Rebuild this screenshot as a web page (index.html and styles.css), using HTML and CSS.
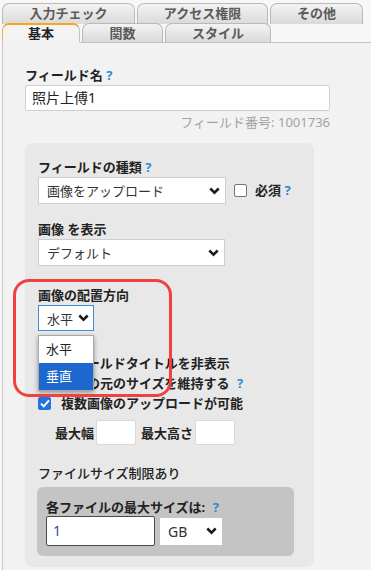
FILE: index.html
```html
<!DOCTYPE html>
<html lang="ja">
  <head>
    <meta charset="UTF-8" />
    <meta name="viewport" content="width=device-width, initial-scale=1.0" />
    <title>フィールド設定</title>
    <link rel="stylesheet" href="styles.css">
  </head>
  <body>
    <div class="page">
      <div class="tabbar">
        <div class="tab-row back">
          <div class="tab t-check">入力チェック</div>
          <div class="tab t-access">アクセス権限</div>
          <div class="tab t-other">その他</div>
        </div>
        <div class="tab-row front">
          <div class="tab active t-basic">基本</div>
          <div class="tab t-func">関数</div>
          <div class="tab t-style">スタイル</div>
        </div>
      </div>

      <div class="content">
        <div class="field">
          <div class="label">フィールド名 <span class="help">?</span></div>
          <div class="text-input name-input">照片上傅1</div>
          <div class="field-id">フィールド番号: 1001736</div>
        </div>

        <div class="panel">
          <div class="group g-type">
            <div class="label">フィールドの種類 <span class="help">?</span></div>
            <div class="row">
              <div class="select type-select">
                <span>画像をアップロード</span>
                <svg class="chev" width="11" height="8" viewBox="0 0 11 8"><path d="M1.3 1.5l4.2 4.2 4.2-4.2" fill="none" stroke="#1a1a1a" stroke-width="2.5"/></svg>
              </div>
              <span class="checkbox"></span>
              <span class="label inline">必須 <span class="help">?</span></span>
            </div>
          </div>

          <div class="group g-display">
            <div class="label">画像 を表示</div>
            <div class="select display-select">
              <span>デフォルト</span>
              <svg class="chev" width="11" height="8" viewBox="0 0 11 8"><path d="M1.3 1.5l4.2 4.2 4.2-4.2" fill="none" stroke="#1a1a1a" stroke-width="2.5"/></svg>
            </div>
          </div>

          <div class="group g-dir">
            <div class="label">画像の配置方向</div>
            <div class="select dir-select">
              <span>水平</span>
              <svg class="chev" width="11" height="8" viewBox="0 0 11 8"><path d="M1.3 1.5l4.2 4.2 4.2-4.2" fill="none" stroke="#1a1a1a" stroke-width="2.5"/></svg>
            </div>
          </div>

          <div class="checks">
            <div class="check-row"><span class="checkbox"></span><span class="label inline">フィールドタイトルを非表示</span></div>
            <div class="check-row"><span class="checkbox"></span><span class="label inline">画像の元のサイズを維持する <span class="help gap">?</span></span></div>
            <div class="check-row">
              <span class="checkbox checked">
                <svg width="10" height="9" viewBox="0 0 10 9"><path d="M1 4.6l2.8 2.8L9 1.4" fill="none" stroke="#fff" stroke-width="2"/></svg>
              </span>
              <span class="label inline">複数画像のアップロードが可能</span>
            </div>
          </div>

          <div class="size-row">
            <span class="label inline">最大幅</span>
            <span class="small-input"></span>
            <span class="label inline max-h">最大高さ</span>
            <span class="small-input"></span>
          </div>

          <div class="limit-title">ファイルサイズ制限あり</div>

          <div class="inner-panel">
            <div class="label">各ファイルの最大サイズは: <span class="help gap">?</span></div>
            <div class="row">
              <div class="text-input size-input">1</div>
              <div class="select unit-select">
                <span>GB</span>
                <svg class="chev" width="11" height="8" viewBox="0 0 11 8"><path d="M1.3 1.5l4.2 4.2 4.2-4.2" fill="none" stroke="#1a1a1a" stroke-width="2.5"/></svg>
              </div>
            </div>
          </div>
        </div>
      </div>

      <!-- open dropdown of 画像の配置方向 -->
      <div class="dropdown">
        <div class="option">水平</div>
        <div class="option selected">垂直</div>
      </div>

      <!-- red annotation frame -->
      <div class="callout"></div>
    </div>
  </body>
</html>
```

FILE: styles.css
```css
* {
  box-sizing: border-box;
  margin: 0;
  padding: 0;
  font-family: "Noto Sans", "Noto Sans CJK JP", sans-serif;
}

body {
  background: #f7f7f7;
  width: 371px;
  height: 570px;
  overflow: hidden;
}

.page {
  position: relative;
  width: 371px;
  height: 570px;
}

/* tabs */
.tabbar {
  padding: 3px 0 0 2px;
}

.tab-row {
  display: flex;
  gap: 2px;
}

.tab {
  height: 21px;
  border: 1px solid #b9b9b9;
  border-bottom: none;
  border-radius: 7px 7px 0 0;
  background: linear-gradient(#f3f3f3, #dadada);
  color: #5a5a5a;
  font-size: 13px;
  font-weight: 700;
  line-height: 19px;
  text-align: center;
}

.tab-row.front {
  margin-top: -1px;
  position: relative;
  z-index: 1;
}

.tab-row.front .tab {
  height: 20px;
  border-bottom: 1px solid #c4c4c4;
}

.t-check { width: 133px; }
.t-access { width: 131px; }
.t-other { width: 93px; }
.t-basic { width: 78px; }
.t-func { width: 81px; }
.t-style { width: 106px; }

.tab-row.front .tab.active {
  background: #f3f3f3;
  border-color: #f5a623 #c4c4c4 #f3f3f3 #e8b45a;
  border-top-width: 2px;
  color: #222;
  line-height: 17px;
}

/* content */
.content {
  margin-top: -1px;
  border-top: 1px solid #c4c4c4;
  border-left: 1px solid #c8c8c8;
  margin-left: 2px;
  background: #f2f2f2;
  height: 528px;
  padding: 24px 0 0 22px;
}

.label {
  font-size: 13px;
  font-weight: 700;
  color: #222;
  line-height: 16px;
}

.label.inline {
  display: inline-block;
}

.help {
  color: #2b8bd3;
  font-weight: 700;
}

.help.gap {
  margin-left: 4px;
}

.field {
  width: 305px;
}

.text-input {
  background: #fff;
  border: 1px solid #cfcfcf;
  border-radius: 2px;
  color: #222;
  font-size: 14px;
}

.name-input {
  margin-top: 2px;
  height: 26px;
  line-height: 24px;
  padding-left: 6px;
}

.field-id {
  margin-top: 3px;
  text-align: right;
  color: #a3a3a3;
  font-size: 13px;
  line-height: 16px;
}

.panel {
  margin-top: 13px;
  width: 289px;
  background: #e8e8e8;
  border-radius: 7px;
  padding: 16px 0 11px 13px;
}

.row {
  display: flex;
  align-items: center;
}

.select {
  display: flex;
  align-items: center;
  justify-content: space-between;
  background: #fff;
  border: 1px solid #cdcdcd;
  color: #333;
  font-size: 13px;
  padding: 0 5px 0 8px;
}

.group .label {
  margin-bottom: 2px;
}

.type-select {
  width: 188px;
  height: 27px;
}

.checkbox {
  display: inline-flex;
  align-items: center;
  justify-content: center;
  width: 13px;
  height: 13px;
  background: #fff;
  border: 1px solid #767676;
  border-radius: 2px;
  flex-shrink: 0;
}

.g-type .checkbox {
  margin: 0 8px 0 8px;
}

.g-display {
  margin-top: 17px;
}

.display-select {
  width: 187px;
  height: 27px;
}

.g-dir {
  margin-top: 21px;
}

.dir-select {
  width: 56px;
  height: 26px;
  border: 1px solid #3d8fd8;
  padding-right: 4px;
}

.checks {
  margin-top: 22px;
}

.check-row {
  display: flex;
  align-items: center;
  height: 20px;
}

.check-row .checkbox {
  margin-right: 10px;
}

.checkbox.checked {
  background: #1f74e0;
  border-color: #1f74e0;
}

.size-row {
  margin-top: 7px;
  display: flex;
  align-items: center;
  padding-left: 17px;
}

.small-input {
  display: inline-block;
  width: 40px;
  height: 25px;
  background: #fff;
  border: 1px solid #d8d8d8;
  border-radius: 2px;
  margin-left: 2px;
}

.max-h {
  margin-left: 5px;
}

.limit-title {
  margin-top: 20px;
  font-size: 13px;
  font-weight: 500;
  color: #222;
  line-height: 16px;
}

.inner-panel {
  margin: 6px 0 0 -1px;
  width: 257px;
  background: #c4c4c4;
  border-radius: 6px;
  padding: 12px 0 10px 9px;
}

.inner-panel .label {
  margin-bottom: 1px;
}

.size-input {
  width: 109px;
  height: 30px;
  line-height: 28px;
  border: 1px solid #4a4a4a;
  padding-left: 6px;
  color: #2f4f8f;
}

.unit-select {
  margin-left: 5px;
  width: 62px;
  height: 27px;
  border: none;
  font-size: 14px;
}

/* open dropdown list */
.dropdown {
  position: absolute;
  left: 38px;
  top: 335px;
  width: 56px;
  border: 1px solid #a8a8a8;
  background: #fff;
  box-shadow: 0 2px 5px rgba(0, 0, 0, 0.35);
  z-index: 5;
}

.option {
  height: 27px;
  line-height: 27px;
  padding-left: 7px;
  font-size: 13px;
  color: #222;
}

.option.selected {
  background: #1c68cf;
  color: #fff;
}

.callout {
  position: absolute;
  left: 13px;
  top: 279px;
  width: 159px;
  height: 118px;
  border: 3px solid #f04040;
  border-radius: 16px;
  z-index: 6;
}
```
